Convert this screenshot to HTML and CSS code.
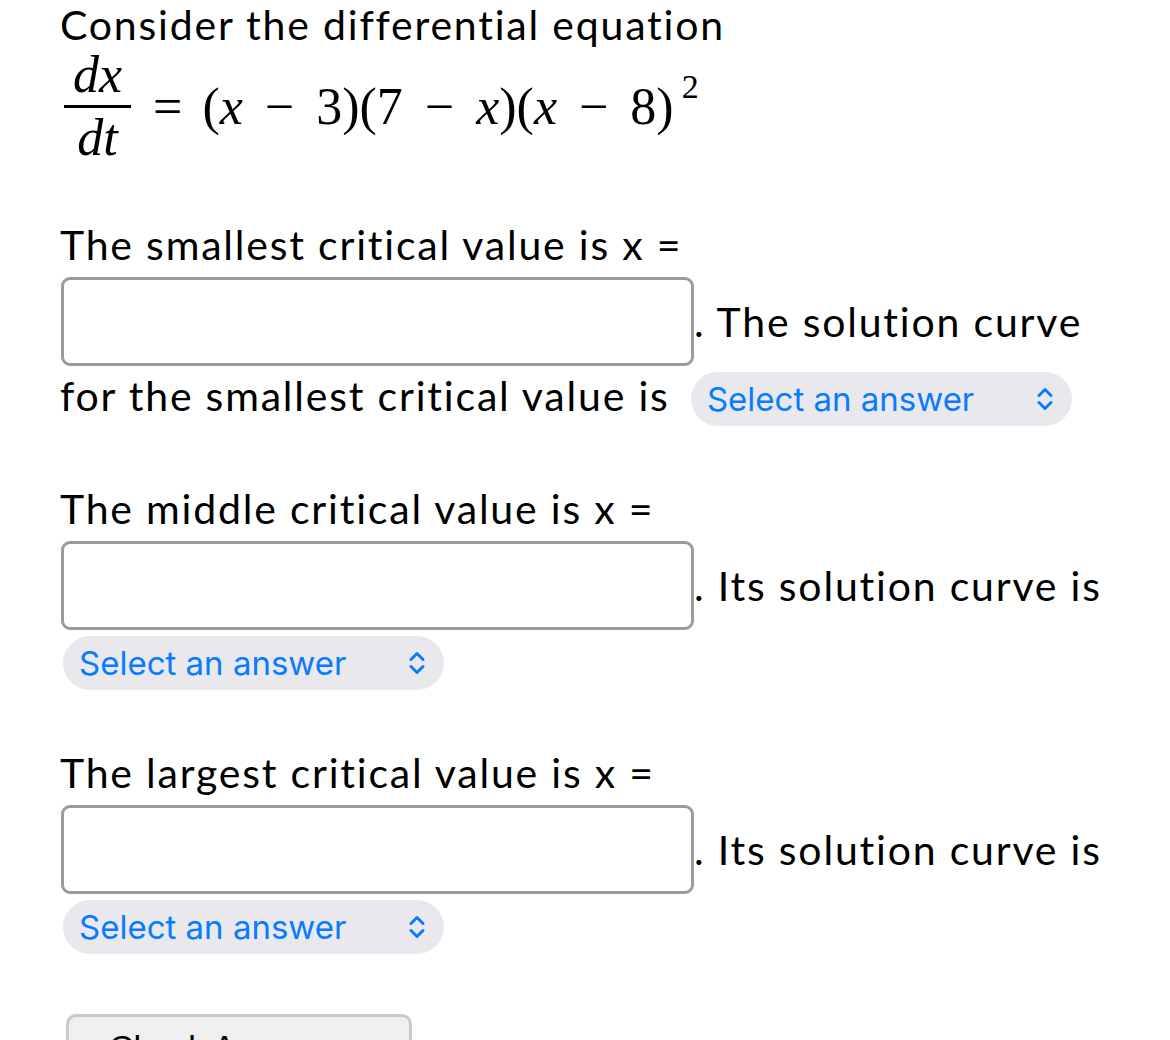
FILE: index.html
```html
<!DOCTYPE html>
<html lang="en">
<head>
<meta charset="utf-8">
<title>Differential equation question</title>
<link rel="stylesheet" href="styles.css">
</head>
<body>
<div class="question">
  <p class="intro">Consider the differential equation</p>
  <div class="math">
    <span class="frac"><span class="num"><i>dx</i></span><span class="bar"></span><span class="den"><i>dt</i></span></span>
    <span class="rhs"><span class="eq">=</span>(<i>x</i><span class="op">−</span>3)(7<span class="op">−</span><i>x</i>)(<i>x</i><span class="op">−</span>8)<sup>2</sup></span>
  </div>

  <p class="part">The smallest critical value is x = <input type="text" class="answer" aria-label="smallest critical value">. The solution curve for the smallest critical value is <span class="select select-first"><span class="select-label">Select an answer</span><svg class="chev" viewBox="0 0 16 26" width="16" height="26"><path d="M2 9.5 L8 3.5 L14 9.5 M2 16.5 L8 22.5 L14 16.5" fill="none" stroke="#0a7aff" stroke-width="2.9" stroke-linecap="round" stroke-linejoin="round"/></svg></span></p>

  <p class="part">The middle critical value is x = <input type="text" class="answer" aria-label="middle critical value">. Its solution curve is <span class="select"><span class="select-label">Select an answer</span><svg class="chev" viewBox="0 0 16 26" width="16" height="26"><path d="M2 9.5 L8 3.5 L14 9.5 M2 16.5 L8 22.5 L14 16.5" fill="none" stroke="#0a7aff" stroke-width="2.9" stroke-linecap="round" stroke-linejoin="round"/></svg></span></p>

  <p class="part">The largest critical value is x = <input type="text" class="answer" aria-label="largest critical value">. Its solution curve is <span class="select"><span class="select-label">Select an answer</span><svg class="chev" viewBox="0 0 16 26" width="16" height="26"><path d="M2 9.5 L8 3.5 L14 9.5 M2 16.5 L8 22.5 L14 16.5" fill="none" stroke="#0a7aff" stroke-width="2.9" stroke-linecap="round" stroke-linejoin="round"/></svg></span></p>

  <button class="check" type="button">Check Answer</button>
</div>
</body>
</html>
```

FILE: styles.css
```css
html, body {
  margin: 0;
  padding: 0;
  background: #ffffff;
  overflow: hidden;
}

body {
  font-family: "Lato", "Open Sans", sans-serif;
  font-size: 41px;
  letter-spacing: 1.8px;
  color: #000000;
}

.question {
  width: 1050px;
  padding: 1px 0 0 60px;
  line-height: 48px;
}

.intro {
  margin: 0;
}

.math {
  display: flex;
  align-items: center;
  font-family: "Liberation Serif", "DejaVu Serif", serif;
  font-size: 52px;
  letter-spacing: 0;
  line-height: 1;
  margin: 0 0 0 4px;
}

.frac {
  display: inline-flex;
  flex-direction: column;
  align-items: center;
}

.num, .den {
  padding: 0 9px;
  line-height: 52px;
}

.num {
  padding-bottom: 4px;
}

.den {
  padding-top: 4px;
}

.bar {
  align-self: stretch;
  height: 3px;
  background: #000;
}

.rhs {
  white-space: nowrap;
  margin-bottom: 10px;
}

.eq {
  margin: 0 20px 0 22px;
}

.op {
  margin: 0 22px;
}

.rhs sup {
  font-size: 34px;
  vertical-align: 26px;
  margin-left: 8px;
}

.part {
  margin: 59px 0 0 0;
}

.math + .part {
  margin-top: 57px;
}

.answer {
  box-sizing: border-box;
  width: 633px;
  height: 89px;
  margin: 8px 0 0 1px;
  padding: 0 12px;
  border: 3px solid #9b9b9b;
  border-radius: 9px;
  background: #ffffff;
  font-family: inherit;
  font-size: 40px;
  vertical-align: baseline;
  outline: none;
}

.select {
  display: inline-flex;
  align-items: center;
  justify-content: space-between;
  box-sizing: border-box;
  width: 381px;
  height: 54px;
  margin: 6px 0 0 3px;
  padding: 0 19px 0 16px;
  border-radius: 27px;
  background: #e9e9ed;
  color: #0a7aff;
  font-family: "Inter", "Roboto", sans-serif;
  font-size: 33px;
  letter-spacing: 0;
  line-height: 40px;
}

.select-first {
  margin-left: 9px;
}

.chev {
  width: 16px;
  height: 26px;
  flex: none;
}

.check {
  display: block;
  box-sizing: border-box;
  width: 346px;
  margin: 60px 0 0 6px;
  padding: 10px 0 30px 40px;
  text-align: left;
  border: 3px solid #c9c9c9;
  border-radius: 10px;
  background: #efefef;
  color: #000;
  font-family: "Liberation Sans", Arial, sans-serif;
  font-size: 34px;
  letter-spacing: 0;
  line-height: 40px;
}
```
